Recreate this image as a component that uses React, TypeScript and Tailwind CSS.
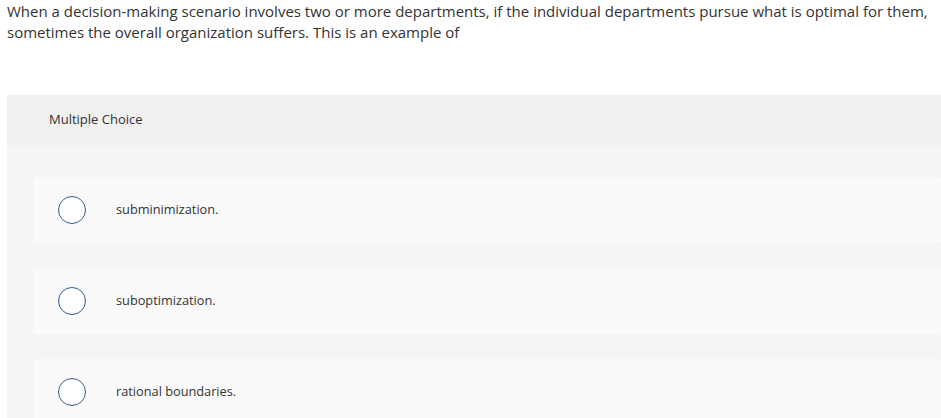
import React from "react";

const options = ["subminimization.", "suboptimization.", "rational boundaries."];

export default function App() {
  return (
    <div className="h-screen overflow-hidden bg-white pl-[7px] text-[#333333]" style={{ fontFamily: "'Open Sans', 'Liberation Sans', sans-serif" }}>
      <p className="pt-px text-[15px] leading-[21px] w-[925px]">
        When a decision-making scenario involves two or more departments, if the individual departments pursue what is optimal for them, sometimes the overall organization suffers. This is an example of
      </p>
      <div className="mt-[52px] w-[934px]">
        <div className="flex h-[50px] items-center bg-[#f0f0f0] pl-[42px] text-[13px]">Multiple Choice</div>
        <div className="flex flex-col gap-[25px] bg-[#f5f5f5] pl-[26px] pt-[32px] pb-[25px]">
          {options.map((o) => (
            <div key={o} className="flex h-[66px] items-center rounded-[3px] bg-[#fafafa] pl-[25px]">
              <span className="box-border h-[28px] w-[28px] shrink-0 rounded-full border-[1.5px] border-[#2e5d8c] bg-white" />
              <span className="ml-[30px] text-[12.75px]">{o}</span>
            </div>
          ))}
        </div>
      </div>
    </div>
  );
}
